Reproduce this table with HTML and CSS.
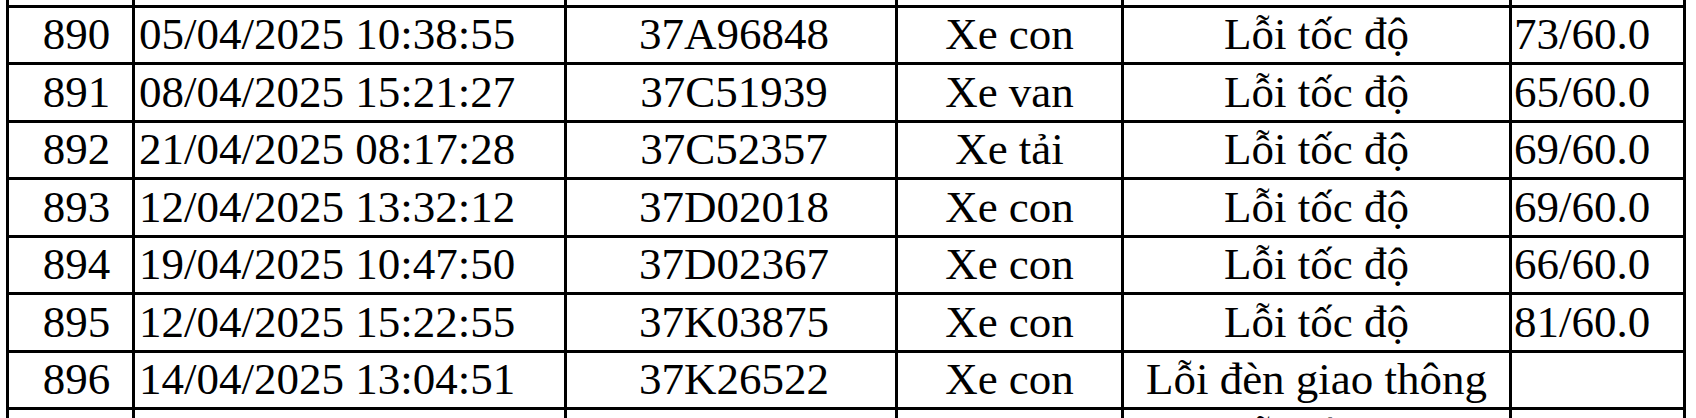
FILE: index.html
```html
<!DOCTYPE html>
<html lang="vi">
<head>
<meta charset="utf-8">
<title>Danh sách vi phạm</title>
<link rel="stylesheet" href="styles.css">
</head>
<body>
<table class="sheet">
  <colgroup>
    <col class="c-stt"><col class="c-time"><col class="c-plate"><col class="c-type"><col class="c-err"><col class="c-speed">
  </colgroup>
  <tr class="stub"><td></td><td></td><td></td><td></td><td></td><td></td></tr>
  <tr class="r-a"><td class="num">890</td><td class="time">05/04/2025 10:38:55</td><td class="plate">37A96848</td><td class="mid">Xe con</td><td class="mid">Lỗi tốc độ</td><td class="speed">73/60.0</td></tr>
  <tr class="r-b"><td class="num">891</td><td class="time">08/04/2025 15:21:27</td><td class="plate">37C51939</td><td class="mid">Xe van</td><td class="mid">Lỗi tốc độ</td><td class="speed">65/60.0</td></tr>
  <tr class="r-a"><td class="num">892</td><td class="time">21/04/2025 08:17:28</td><td class="plate">37C52357</td><td class="mid">Xe tải</td><td class="mid">Lỗi tốc độ</td><td class="speed">69/60.0</td></tr>
  <tr class="r-b"><td class="num">893</td><td class="time">12/04/2025 13:32:12</td><td class="plate">37D02018</td><td class="mid">Xe con</td><td class="mid">Lỗi tốc độ</td><td class="speed">69/60.0</td></tr>
  <tr class="r-a"><td class="num">894</td><td class="time">19/04/2025 10:47:50</td><td class="plate">37D02367</td><td class="mid">Xe con</td><td class="mid">Lỗi tốc độ</td><td class="speed">66/60.0</td></tr>
  <tr class="r-b"><td class="num">895</td><td class="time">12/04/2025 15:22:55</td><td class="plate">37K03875</td><td class="mid">Xe con</td><td class="mid">Lỗi tốc độ</td><td class="speed">81/60.0</td></tr>
  <tr class="r-a"><td class="num">896</td><td class="time">14/04/2025 13:04:51</td><td class="plate">37K26522</td><td class="mid">Xe con</td><td class="mid">Lỗi đèn giao thông</td><td class="speed"></td></tr>
  <tr class="r-b peek"><td class="num"></td><td class="time"></td><td class="plate"></td><td class="mid"></td><td class="mid">Lỗi tốc độ</td><td class="speed"></td></tr>
</table>
</body>
</html>
```
FILE: styles.css
```css
html, body {
  margin: 0;
  padding: 0;
  background: #ffffff;
  font-family: "Liberation Serif", "Times New Roman", serif;
}

.sheet {
  margin-left: 6px;
  border-collapse: separate;
  border-spacing: 0;
  border-left: 3px solid #000;
  table-layout: fixed;
  width: 1680px;
  color: #000;
}

.c-stt { width: 126px; }
.c-time { width: 432px; }
.c-plate { width: 331px; }
.c-type { width: 226px; }
.c-err { width: 388px; }
.c-speed { width: 174px; }

.sheet td {
  font-family: "Liberation Serif", "Times New Roman", serif;
  font-size: 45px;
  border-right: 3px solid #000;
  border-bottom: 3px solid #000;
  padding: 0 0 2px 0;
  white-space: nowrap;
  vertical-align: middle;
  line-height: 50px;
}

.stub td { height: 5px; line-height: 5px; padding: 0; }
.r-a td { height: 52px; }
.r-b td { height: 53px; }
.peek td { vertical-align: top; padding-top: 0; }

.num { text-align: center; padding-left: 12px !important; }
.time { text-align: left; padding-left: 4px !important; }
.plate { text-align: center; padding-left: 6px !important; }
.mid { text-align: center; }
.speed { text-align: left; padding-left: 2px !important; }
```
